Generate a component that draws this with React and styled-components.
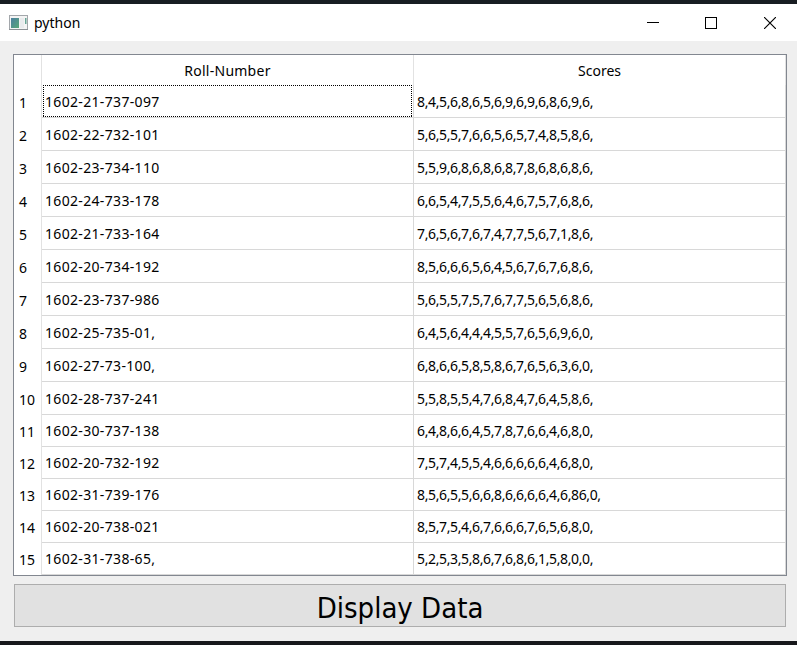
import React from 'react';
import styled, { createGlobalStyle } from 'styled-components';

const GlobalStyle = createGlobalStyle`
  * { box-sizing: border-box; }
  body { margin: 0; overflow: hidden; background: #efefef; }
`;

const Window = styled.div`
  display: flex;
  flex-direction: column;
  width: 797px;
  height: 645px;
  border-top: 4px solid #181d22;
  border-bottom: 4px solid #17181b;
  background: #efefef;
  color: #000;
  font: 14px/20px 'Noto Sans', 'Open Sans', sans-serif;
`;

const TitleBar = styled.header`
  display: flex;
  align-items: center;
  height: 37px;
  flex: none;
  padding-left: 9px;
  background: #fff;
`;

const Title = styled.h1`
  flex: 1;
  margin: 0 0 0 6px;
  font-size: 14px;
  font-weight: 400;
`;

const WindowButton = styled.button`
  display: flex;
  align-items: center;
  justify-content: center;
  width: ${({ $width }) => $width}px;
  height: 37px;
  padding: 0;
  border: 0;
  background: none;
`;

const Content = styled.main`
  display: flex;
  flex-direction: column;
  gap: 8px;
  padding: 13px 10px 14px 13px;
`;

const Table = styled.div`
  width: 774px;
  height: 522px;
  border: 1px solid #828790;
  background: #fff;
`;

const Row = styled.div`
  display: grid;
  grid-template-columns: 28px 372px 372px;
  height: ${({ $height }) => $height}px;
`;

const HeaderCell = styled.div`
  padding-top: 6px;
  border-right: 1px solid #e2e2e2;
  letter-spacing: ${({ $spacing = 0 }) => $spacing}px;
  text-align: center;
`;

const RowNumber = styled.div`
  display: flex;
  align-items: center;
  padding: 2px 0 0 5px;
  border-right: 1px solid #e2e2e2;
`;

const Cell = styled.div`
  position: relative;
  display: flex;
  align-items: center;
  padding: 1px 0 0 3px;
  border-right: 1px solid #d8d8d8;
  border-bottom: 1px solid #d8d8d8;
  letter-spacing: ${({ $spacing }) => $spacing}px;
  white-space: nowrap;
`;

const FocusFrame = styled.svg`
  position: absolute;
  left: 1px;
  top: 0;
`;

const DisplayButton = styled.button`
  width: 772px;
  height: 43px;
  margin-left: 1px;
  padding: 5px 0 0;
  border: 1px solid #adadad;
  background: #e1e1e1;
  color: #000;
  font: 29px/36px 'DejaVu Sans Condensed', 'DejaVu Sans', sans-serif;
  font-stretch: condensed;
`;

const rows = [
  ['1602-21-737-097', '8,4,5,6,8,6,5,6,9,6,9,6,8,6,9,6,'],
  ['1602-22-732-101', '5,6,5,5,7,6,6,5,6,5,7,4,8,5,8,6,'],
  ['1602-23-734-110', '5,5,9,6,8,6,8,6,8,7,8,6,8,6,8,6,'],
  ['1602-24-733-178', '6,6,5,4,7,5,5,6,4,6,7,5,7,6,8,6,'],
  ['1602-21-733-164', '7,6,5,6,7,6,7,4,7,7,5,6,7,1,8,6,'],
  ['1602-20-734-192', '8,5,6,6,6,5,6,4,5,6,7,6,7,6,8,6,'],
  ['1602-23-737-986', '5,6,5,5,7,5,7,6,7,7,5,6,5,6,8,6,'],
  ['1602-25-735-01,', '6,4,5,6,4,4,4,5,5,7,6,5,6,9,6,0,'],
  ['1602-27-73-100,', '6,8,6,6,5,8,5,8,6,7,6,5,6,3,6,0,'],
  ['1602-28-737-241', '5,5,8,5,5,4,7,6,8,4,7,6,4,5,8,6,'],
  ['1602-30-737-138', '6,4,8,6,6,4,5,7,8,7,6,6,4,6,8,0,'],
  ['1602-20-732-192', '7,5,7,4,5,5,4,6,6,6,6,6,4,6,8,0,'],
  ['1602-31-739-176', '8,5,6,5,5,6,6,8,6,6,6,6,4,6,86,0,'],
  ['1602-20-738-021', '8,5,7,5,4,6,7,6,6,6,7,6,5,6,8,0,'],
  ['1602-31-738-65,', '5,2,5,3,5,8,6,7,6,8,6,1,5,8,0,0,'],
];

function AppIcon() {
  return (
    <svg width="19" height="16" viewBox="0 0 19 16">
      <defs>
        <linearGradient id="pane" x1="0" y1="0" x2="1" y2="1">
          <stop offset="0" stopColor="#4c7fa0" />
          <stop offset="1" stopColor="#59a878" />
        </linearGradient>
      </defs>
      <rect x="0.5" y="0.5" width="18" height="14" fill="#f4f4f4" stroke="#a3a7ab" />
      <path d="M0 14.5h19" stroke="#8c9195" />
      <rect x="2" y="3" width="8" height="10" fill="url(#pane)" />
      <rect x="11" y="3" width="4" height="10" fill="#e9ebed" />
      <rect x="16" y="3" width="1.5" height="6" fill="#68a596" />
    </svg>
  );
}

export default function App() {
  return (
    <>
      <GlobalStyle />
      <Window>
        <TitleBar>
          <AppIcon />
          <Title>python</Title>
          <WindowButton $width={52} aria-label="Minimize">
            <svg width="12" height="12" shapeRendering="crispEdges">
              <path d="M0 5.5h12" stroke="#000" />
            </svg>
          </WindowButton>
          <WindowButton $width={64} aria-label="Maximize">
            <svg width="12" height="12" shapeRendering="crispEdges">
              <rect x="0.5" y="0.5" width="11" height="11" fill="none" stroke="#000" />
            </svg>
          </WindowButton>
          <WindowButton $width={54} aria-label="Close">
            <svg width="12" height="12">
              <path d="M0 0l12 12M12 0L0 12" stroke="#000" strokeWidth="1.15" />
            </svg>
          </WindowButton>
        </TitleBar>
        <Content>
          <Table>
            <Row $height={30}>
              <HeaderCell />
              <HeaderCell $spacing={0.25}>Roll-Number</HeaderCell>
              <HeaderCell>Scores</HeaderCell>
            </Row>
            {rows.map(([roll, scores], i) => (
              <Row key={i} $height={i < 10 ? 33 : 32}>
                <RowNumber>{i + 1}</RowNumber>
                <Cell $spacing={0.33}>
                  {i === 0 && (
                    <FocusFrame width="369" height="33" shapeRendering="crispEdges">
                      <path
                        d="M0 0.5H369M0 31.5H369M0.5 0V32M368.5 0V32"
                        fill="none"
                        stroke="#000"
                        strokeDasharray="1 1"
                      />
                    </FocusFrame>
                  )}
                  {roll}
                </Cell>
                <Cell $spacing={-0.38}>{scores}</Cell>
              </Row>
            ))}
          </Table>
          <DisplayButton>Display Data</DisplayButton>
        </Content>
      </Window>
    </>
  );
}
